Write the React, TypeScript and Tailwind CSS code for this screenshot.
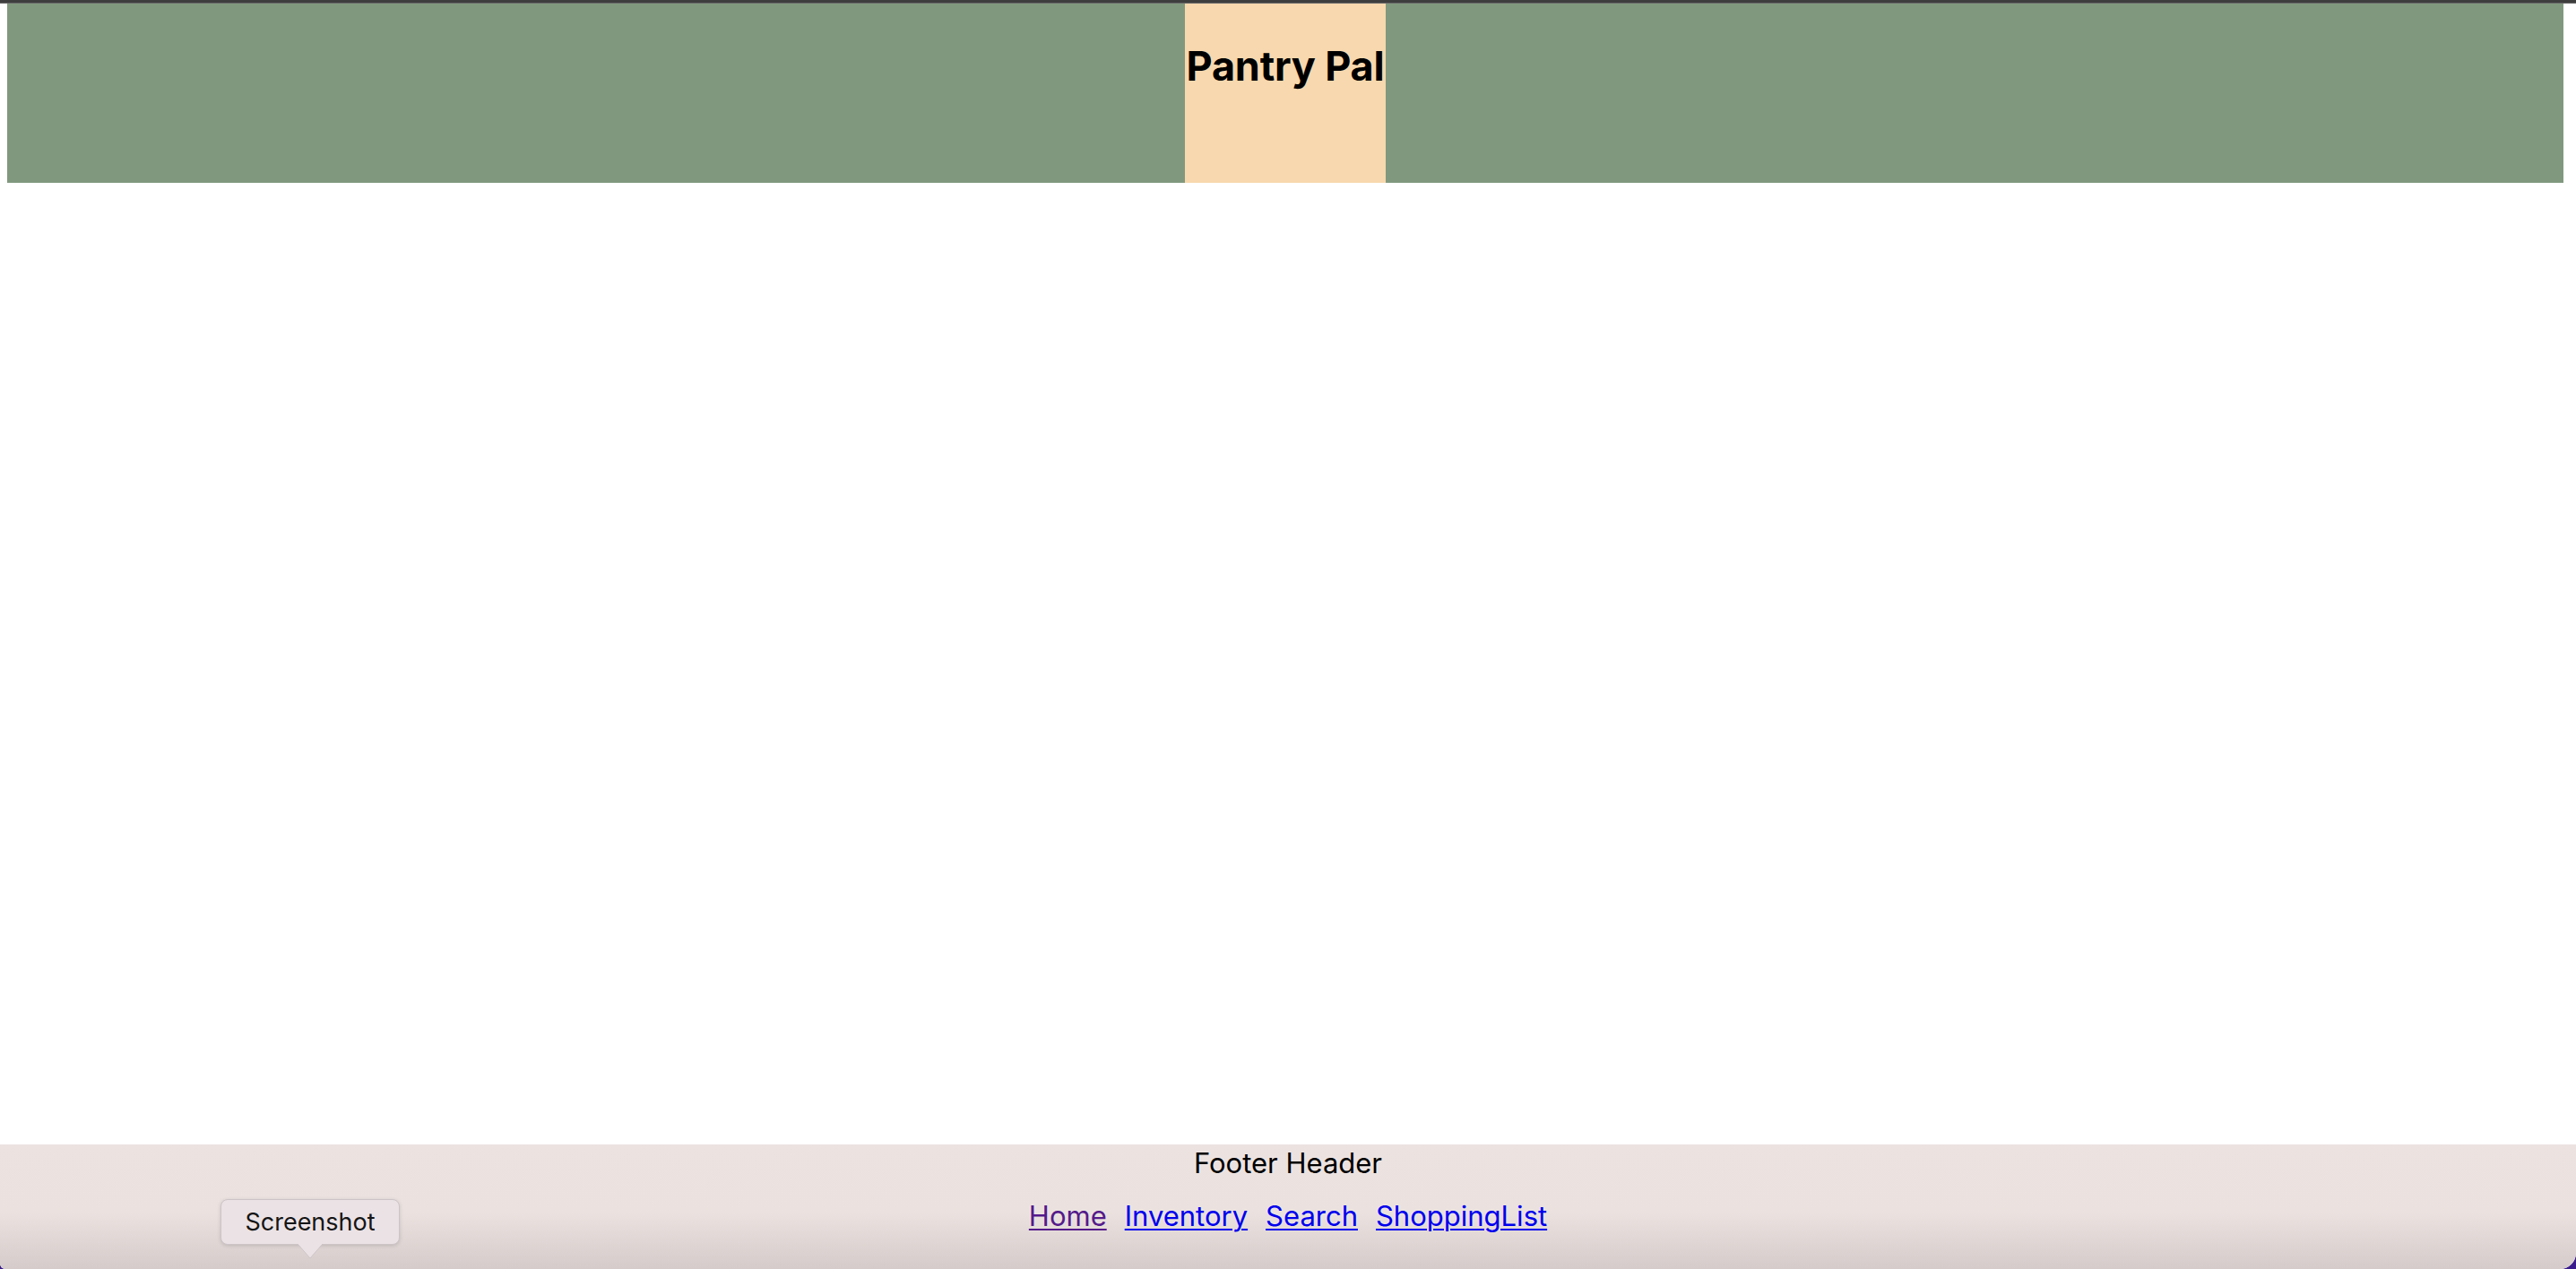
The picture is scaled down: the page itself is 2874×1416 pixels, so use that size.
import React from "react";

export default function App() {
  return (
    <div className="h-screen w-full flex flex-col bg-[#3a1c8c] font-['Inter','Noto_Sans',sans-serif] overflow-hidden">
      {/* top strip */}
      <div className="h-[3px] w-full bg-[#3e3e3e]" />
      <div className="h-[1px] w-full bg-[#6b6b6b]" />

      <div className="flex-1 flex flex-col bg-white rounded-br-[18px] rounded-bl-[6px] overflow-hidden">
        {/* Header */}
        <div className="h-[200px] ml-[8px] mr-[14px] bg-[#80997e] flex justify-center">
          <div className="w-[224px] h-full bg-[#f8d8ae] flex justify-center">
            <h1 className="pt-[47px] text-[45px] leading-none font-bold text-black whitespace-nowrap tracking-[-0.2px]">
              Pantry Pal
            </h1>
          </div>
        </div>

        {/* Content */}
        <div className="flex-1" />

        {/* Footer */}
        <footer className="relative h-[139px] bg-[linear-gradient(to_bottom,#ece3e1_0%,#ebe2e0_55%,#d4cbca_100%)] flex flex-col items-center pt-[5px]">
          <p className="text-[31px] leading-none text-black">Footer Header</p>
          <nav className="mt-[28px] flex items-center gap-[20px] text-[31px] leading-none">
            <a href="#" className="text-[#551a8b] underline decoration-2 underline-offset-[3px]">Home</a>
            <a href="#" className="text-[#0000ee] underline decoration-2 underline-offset-[3px]">Inventory</a>
            <a href="#" className="text-[#0000ee] underline decoration-2 underline-offset-[3px]">Search</a>
            <a href="#" className="text-[#0000ee] underline decoration-2 underline-offset-[3px]">ShoppingList</a>
          </nav>

          {/* Tooltip */}
          <div className="absolute left-[246px] top-[61px] flex flex-col items-center">
            <div className="w-[200px] h-[51px] rounded-[8px] bg-[#ebe2e5] border border-[#cdc4c7] shadow-[0_1px_4px_rgba(0,0,0,0.15)] flex items-center justify-center">
              <span className="text-[27px] leading-none text-[#151515]">Screenshot</span>
            </div>
            <svg width="28" height="17" viewBox="0 0 28 17" className="-mt-[1px]">
              <path d="M0 0 L14 16 L28 0 Z" fill="#ebe2e5" />
              <path d="M0 0 L14 16 L28 0" fill="none" stroke="#cdc4c7" strokeWidth="1" />
            </svg>
          </div>
        </footer>
      </div>
    </div>
  );
}
